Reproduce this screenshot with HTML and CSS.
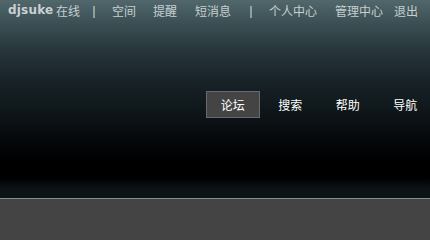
FILE: index.html
```html
<!DOCTYPE html>
<html lang="zh">
<head>
<meta charset="utf-8">
<title>djsuke</title>
<link rel="stylesheet" href="styles.css">
</head>
<body>
<div class="header">
  <div class="topbar">
    <span class="user">djsuke</span>
    <span class="status">在线</span>
    <span class="sep sep1">|</span>
    <a class="tlink l-space">空间</a>
    <a class="tlink l-remind">提醒</a>
    <a class="tlink l-msg">短消息</a>
    <span class="sep sep2">|</span>
    <a class="tlink l-ucp">个人中心</a>
    <a class="tlink l-admin">管理中心</a>
    <a class="tlink l-logout">退出</a>
  </div>
  <div class="nav">
    <a class="navitem active">论坛</a>
    <a class="navitem">搜索</a>
    <a class="navitem">帮助</a>
    <a class="navitem">导航</a>
  </div>
</div>
<div class="main"></div>
</body>
</html>
```
FILE: styles.css
```css
html, body {
  margin: 0;
  padding: 0;
  background: #444444;
  overflow: hidden;
}
body {
  width: 430px;
  height: 234px;
  font-family: "DejaVu Sans", "Noto Sans CJK SC", sans-serif;
  font-size: 12px;
}
.header {
  height: 198px;
  display: flex;
  flex-direction: column;
  background: linear-gradient(to bottom,
    #51676b 0px,
    #3e5357 20px,
    #27363b 50px,
    #182328 80px,
    #0f171a 110px,
    #05080a 140px,
    #000000 160px,
    #000000 178px,
    #0b1316 188px,
    #0c1417 198px);
}
.topbar {
  display: flex;
  align-items: center;
  height: 20px;
  padding-left: 8px;
  color: #c6cfd1;
  white-space: nowrap;
}
.user {
  font-family: "DejaVu Sans", sans-serif;
  font-weight: bold;
  font-size: 12px;
  width: 48px;
  color: #c9d1d3;
  letter-spacing: 0.2px;
}
.status, .tlink {
  font-family: "Noto Sans CJK SC", sans-serif;
  font-size: 12px;
  color: #c6cfd1;
}
.sep {
  font-family: "Liberation Sans", sans-serif;
  font-size: 13px;
  color: #c6cfd1;
  width: 4px;
  text-align: center;
}
.sep1 { margin-left: 12px; }
.l-space { margin-left: 16px; }
.l-remind { margin-left: 17px; }
.l-msg { margin-left: 18px; }
.sep2 { margin-left: 18px; }
.l-ucp { margin-left: 16px; }
.l-admin { margin-left: 18px; }
.l-logout { margin-left: 11px; }

.nav {
  display: flex;
  margin-top: 71px;
  padding-left: 206px;
  gap: 4px;
  white-space: nowrap;
}
.navitem {
  flex: none;
  box-sizing: border-box;
  width: 53.5px;
  height: 27px;
  display: flex;
  align-items: center;
  justify-content: center;
  font-family: "Noto Sans CJK SC", sans-serif;
  font-size: 12px;
  color: #ffffff;
  border: 1px solid transparent;
}
.navitem.active {
  background: #444444;
  border-color: #6a6a6a;
}
.main {
  height: 35px;
  border-top: 1px solid #8a8a8a;
  background: #444444;
}
```
